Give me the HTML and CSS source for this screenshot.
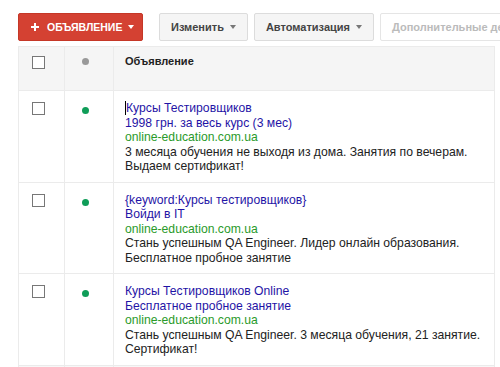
FILE: index.html
```html
<!DOCTYPE html>
<html lang="ru">
<head>
    <meta charset="UTF-8">
    <meta name="viewport" content="width=device-width, initial-scale=1.0">
    <title>Объявления</title>
    <link rel="stylesheet" href="styles.css">
</head>
<body>
    <div class="toolbar">
        <button class="btn btn-red">
            <svg class="plus" width="8" height="8" viewBox="0 0 8 8"><path d="M3 0h2v3h3v2H5v3H3V5H0V3h3z" fill="#fff"/></svg>
            ОБЪЯВЛЕНИЕ<span class="caret"></span>
        </button>
        <div class="sep"></div>
        <button class="btn">Изменить<span class="caret"></span></button>
        <button class="btn">Автоматизация<span class="caret"></span></button>
        <button class="btn btn-disabled">Дополнительные действия</button>
    </div>

    <table class="ads">
        <tr class="head">
            <td class="c-check"><span class="box"></span></td>
            <td class="c-dot"><span class="dot gray"></span></td>
            <td class="c-ad">Объявление</td>
        </tr>
        <tr>
            <td class="c-check"><span class="box"></span></td>
            <td class="c-dot"><span class="dot"></span></td>
            <td class="c-ad">
                <div class="title"><span class="cursor"></span>Курсы Тестировщиков</div>
                <div class="title">1998 грн. за весь курс (3 мес)</div>
                <div class="url">online-education.com.ua</div>
                <div class="desc">3 месяца обучения не выходя из дома. Занятия по вечерам. Выдаем сертификат!</div>
            </td>
        </tr>
        <tr>
            <td class="c-check"><span class="box"></span></td>
            <td class="c-dot"><span class="dot"></span></td>
            <td class="c-ad">
                <div class="title">{keyword:Курсы тестировщиков}</div>
                <div class="title">Войди в IT</div>
                <div class="url">online-education.com.ua</div>
                <div class="desc">Стань успешным QA Engineer. Лидер онлайн образования. Бесплатное пробное занятие</div>
            </td>
        </tr>
        <tr>
            <td class="c-check"><span class="box"></span></td>
            <td class="c-dot"><span class="dot"></span></td>
            <td class="c-ad">
                <div class="title">Курсы Тестировщиков Online</div>
                <div class="title">Бесплатное пробное занятие</div>
                <div class="url">online-education.com.ua</div>
                <div class="desc">Стань успешным QA Engineer. 3 месяца обучения, 21 занятие. Сертификат!</div>
            </td>
        </tr>
        <tr class="next">
            <td class="c-check"></td>
            <td class="c-dot"></td>
            <td class="c-ad"></td>
        </tr>
    </table>
</body>
</html>
```

FILE: styles.css
```css
body {
    margin: 0;
    font-family: Arial, "Liberation Sans", sans-serif;
    background: #fff;
    overflow: hidden;
}
.toolbar {
    display: flex;
    align-items: center;
    padding: 13px 0 0 18px;
    white-space: nowrap;
    height: 28px;
}
.btn {
    display: flex;
    align-items: center;
    height: 28px;
    padding: 0 11px;
    margin-right: 6px;
    border: 1px solid #dcdcdc;
    border-radius: 2px;
    background: #f5f5f5;
    color: #444;
    font-family: Arial, "Liberation Sans", sans-serif;
    font-size: 11px;
    font-weight: bold;
    flex-shrink: 0;
}
.btn-red {
    width: 125px;
    padding: 0 0 0 12px;
    background: #d44132;
    border-color: #c53727;
    color: #fff;
    margin-right: 0;
    font-size: 10.5px;
}
.plus {
    margin-right: 8px;
}
.caret {
    width: 0;
    height: 0;
    margin-left: 6px;
    border-left: 3.5px solid transparent;
    border-right: 3.5px solid transparent;
    border-top: 4px solid #777;
}
.btn-red .caret {
    border-top-color: #fff;
}
.sep {
    width: 1px;
    height: 28px;
    background: #e5e5e5;
    margin: 0 8px;
}
.btn-disabled {
    background: #fff;
    border-color: #e5e5e5;
    color: #bbb;
}
.ads {
    margin: 5px 0 0 18px;
    width: 477px;
    border-collapse: collapse;
    font-size: 12.2px;
    line-height: 14.5px;
}
.ads td {
    border: 1px solid #ebebeb;
    vertical-align: top;
    padding: 0;
}
.head td {
    background: #f5f5f5;
}
.c-check {
    width: 45px;
    padding-top: 11px !important;
}
.head .c-check {
    padding-top: 9px !important;
}
.c-check .box {
    display: block;
    width: 11px;
    height: 11px;
    margin-left: 13px;
    border: 1px solid #777;
    background: #fff;
}
.c-dot {
    width: 48px;
}
.dot {
    display: block;
    width: 7px;
    height: 7px;
    border-radius: 50%;
    background: #0f9d58;
    margin: 16px 0 0 17px;
}
.dot.gray {
    background: #999;
    margin-top: 11px;
}
.c-ad {
    padding: 10px 10px 8px 11px !important;
    color: #222;
}
.head .c-ad {
    font-weight: bold;
    font-size: 11px;
    line-height: 15px;
    padding: 7px 10px 21px 11px !important;
}
.title {
    color: #1f14a6;
}
.url {
    color: #2a9a2a;
}
.desc {
    color: #222;
}
.cursor {
    display: inline-block;
    width: 1px;
    height: 14px;
    background: #000;
    vertical-align: -3px;
}
.next td {
    height: 20px;
    background: #f7f7f7;
}
```
